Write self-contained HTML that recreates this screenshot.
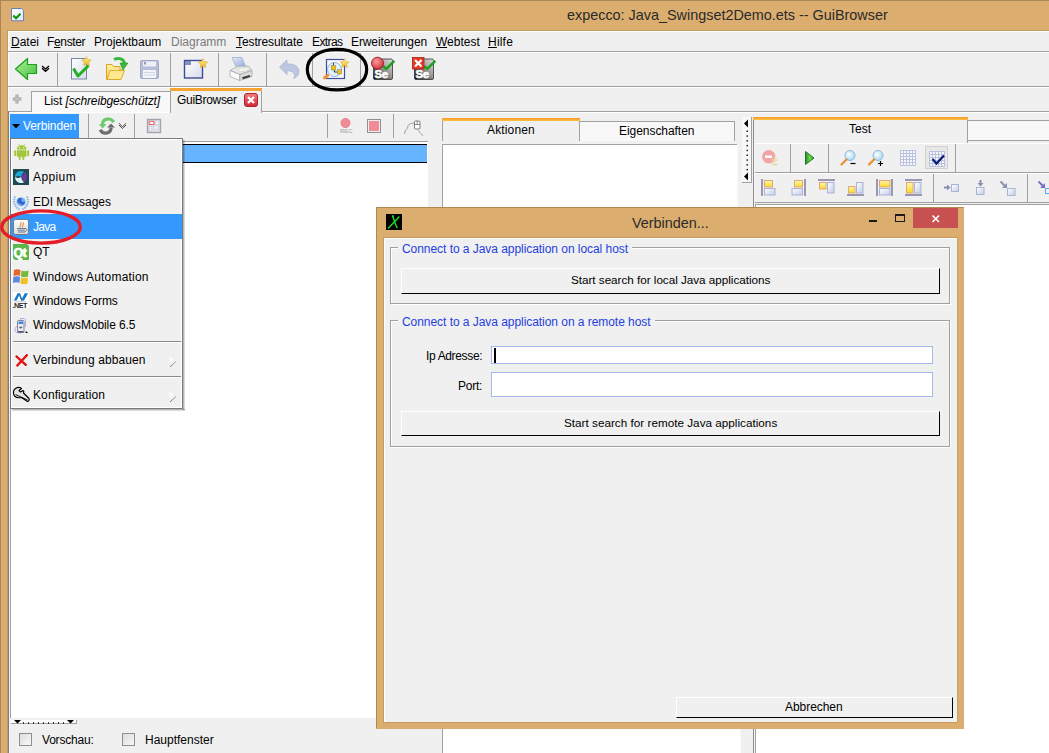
<!DOCTYPE html>
<html><head><meta charset="utf-8">
<style>
*{margin:0;padding:0;box-sizing:border-box}
html,body{width:1049px;height:753px;overflow:hidden;background:#DBAE70;font-family:"Liberation Sans",sans-serif;color:#000}
.a{position:absolute}
.t{position:absolute;white-space:nowrap;font-size:12px;line-height:14px;color:#000}
.u{text-decoration:underline;text-underline-offset:1px}
svg{position:absolute;overflow:visible}
</style></head><body>
<!-- main frame edges -->
<div class="a" style="left:0;top:0;width:1px;height:753px;background:#A8865A"></div>
<div class="a" style="left:0;top:0;width:1049px;height:1px;background:#A8865A"></div>
<!-- title icon -->
<svg style="left:10px;top:7px" width="16" height="16" viewBox="0 0 16 16">
 <defs><linearGradient id="gTi" x1="0" y1="0" x2="1" y2="1"><stop offset="0" stop-color="#FFFFFF"/><stop offset="1" stop-color="#DCE8F8"/></linearGradient></defs>
 <path d="M1.5 1.5h10l2 2v10.3h-12z" fill="url(#gTi)" stroke="#6C7FB8"/>
 <path d="M3.3 8.5l2.7 2.7 4.5-4.5" fill="none" stroke="#0E960E" stroke-width="2.2"/>
</svg>
<div class="t" style="left:567px;top:7px;font-size:14.4px;line-height:16px;color:#2A2A2A">expecco: Java_Swingset2Demo.ets -- GuiBrowser</div>

<!-- client -->
<div class="a" style="left:7px;top:30px;width:1042px;height:723px;background:#C49B5E"></div>
<div class="a" style="left:8px;top:31px;width:1041px;height:722px;background:#FFFFFF"></div>
<div class="a" style="left:9px;top:32px;width:1040px;height:721px;background:#F0F0F0"></div>

<!-- menu bar -->
<div class="a" style="left:8px;top:51px;width:1041px;height:1px;background:#A0A0A0"></div>
<div class="a" style="left:8px;top:52px;width:1041px;height:1px;background:#FFFFFF"></div>
<div class="t" style="left:11px;top:35px;width:28px"><span class="u">D</span>atei</div>
<div class="t" style="left:47px;top:35px;letter-spacing:-0.35px">F<span class="u">e</span>nster</div>
<div class="t" style="left:94px;top:35px">Projektbaum</div>
<div class="t" style="left:171px;top:35px;color:#7A7A7A">Diagramm</div>
<div class="t" style="left:236px;top:35px;letter-spacing:-0.1px"><span class="u">T</span>estresultate</div>
<div class="t" style="left:312px;top:35px;letter-spacing:-0.6px">Extras</div>
<div class="t" style="left:351px;top:35px;letter-spacing:-0.1px">Erweiterungen</div>
<div class="t" style="left:436px;top:35px"><span class="u">W</span>ebtest</div>
<div class="t" style="left:488px;top:35px;letter-spacing:0.2px"><span class="u">H</span>ilfe</div>

<!-- toolbar -->
<div class="a" style="left:8px;top:86px;width:1041px;height:1px;background:#A0A0A0"></div>
<div class="a" style="left:8px;top:87px;width:1041px;height:1px;background:#FFFFFF"></div>
<div class="a" style="left:57px;top:53px;width:1px;height:33px;background:#A0A0A0"></div>
<div class="a" style="left:170px;top:53px;width:1px;height:33px;background:#A0A0A0"></div>
<div class="a" style="left:218px;top:53px;width:1px;height:33px;background:#A0A0A0"></div>
<div class="a" style="left:266px;top:53px;width:1px;height:33px;background:#A0A0A0"></div>
<div class="a" style="left:312px;top:53px;width:1px;height:33px;background:#A0A0A0"></div>
<div class="a" style="left:360px;top:53px;width:1px;height:33px;background:#A0A0A0"></div>
<!-- toolbar icons -->
<svg style="left:0;top:0" width="1049" height="753" viewBox="0 0 1049 753">
 <defs>
  <linearGradient id="gArrow" x1="0" y1="0" x2="1" y2="1"><stop offset="0" stop-color="#B4F09C"/><stop offset="1" stop-color="#3CC23C"/></linearGradient>
  <linearGradient id="gStar" x1="0" y1="0" x2="0" y2="1"><stop offset="0" stop-color="#FFF0A0"/><stop offset="1" stop-color="#E8B820"/></linearGradient>
  <linearGradient id="gDoc" x1="0" y1="0" x2="1" y2="1"><stop offset="0" stop-color="#FFFFFF"/><stop offset="1" stop-color="#D8DCEC"/></linearGradient>
  <linearGradient id="gFold" x1="0" y1="0" x2="0" y2="1"><stop offset="0" stop-color="#FFF4A8"/><stop offset="1" stop-color="#F2C850"/></linearGradient>
  <linearGradient id="gSe" x1="0" y1="0" x2="1" y2="1"><stop offset="0" stop-color="#9A9A9A"/><stop offset="1" stop-color="#3A3A3A"/></linearGradient>
  <radialGradient id="gRed" cx="0.4" cy="0.35" r="0.7"><stop offset="0" stop-color="#FF9A9A"/><stop offset="1" stop-color="#D0303A"/></radialGradient>
 </defs>
 <!-- back arrow -->
 <path d="M15.5,69 L27.5,58.5 L27.5,64.5 L36.5,64.5 L36.5,73.5 L27.5,73.5 L27.5,79.5Z" fill="url(#gArrow)" stroke="#1EA01E" stroke-width="1.2" stroke-linejoin="round"/>
 <path d="M42,66 L45.5,69 L49,66 M42,68.3 L45.5,71.3 L49,68.3" fill="none" stroke="#000" stroke-width="1.3"/>
 <!-- check doc -->
 <rect x="71.5" y="58.5" width="15" height="20.5" fill="url(#gDoc)" stroke="#7288A8"/>
 <path d="M73.5,68.5 L78,76 L88.5,65.5" fill="none" stroke="#22B022" stroke-width="3" stroke-linejoin="round"/>
 <path d="M86.5,56.5 L87.9,59.6 L91.3,60.0 L88.8,62.2 L89.4,65.5 L86.5,63.9 L83.6,65.5 L84.2,62.2 L81.7,60.0 L85.1,59.6Z" fill="url(#gStar)" stroke="#E0B030" stroke-width="0.6"/>
 <!-- open folder -->
 <path d="M106.5,79.5 L106.5,64.5 L112,64.5 L113.5,66.5 L120,66.5 L120,70 L124,70 L120.5,79.5Z" fill="url(#gFold)" stroke="#D9A420" stroke-width="1"/>
 <path d="M107,79.5 L110,70.5 L124.5,70.5 L121,79.5Z" fill="#FFE890" stroke="#D9A420" stroke-width="0.8"/>
 <path d="M114,59.5 C118,57.5 123,58 124.5,63" fill="none" stroke="#3CB83C" stroke-width="3"/>
 <path d="M120,63 L128,63 L123,70Z" fill="#3CB83C" stroke="#1E961E" stroke-width="0.6"/>
 <!-- floppy -->
 <rect x="140.5" y="60.5" width="18" height="18" rx="1.5" fill="#B6BDD6" stroke="#A0A8C4"/>
 <rect x="143" y="61.5" width="13" height="5" fill="#EEF0F8"/>
 <rect x="144" y="62" width="2" height="2.5" fill="#8C96B8"/>
 <rect x="143" y="70" width="13" height="8" fill="#F2F4FA"/>
 <path d="M144,72.5h11M144,75h11" stroke="#C8CEE0" stroke-width="0.8"/>
 <!-- new window -->
 <rect x="184.5" y="60.5" width="18" height="17.5" fill="url(#gDoc)" stroke="#3C4E94" stroke-width="1.4"/>
 <rect x="185" y="61" width="6" height="4" fill="#8090C0"/>
 <path d="M203.0,58.5 L204.4,61.6 L207.8,62.0 L205.3,64.2 L205.9,67.5 L203.0,65.9 L200.1,67.5 L200.7,64.2 L198.2,62.0 L201.6,61.6Z" fill="url(#gStar)" stroke="#E0B030" stroke-width="0.6"/>
 <!-- printer -->
 <defs><linearGradient id="gPap" x1="0" y1="0" x2="1" y2="1"><stop offset="0" stop-color="#E4ECF8"/><stop offset="1" stop-color="#94AADC"/></linearGradient></defs>
 <path d="M232,57.5 L242,57.5 L245.5,66.5 L236,66.8Z" fill="url(#gPap)" stroke="#98AAD8" stroke-width="0.7"/>
 <path d="M230,70.5 L237.5,66.3 L248.5,66 L252,70.5 L240,74.5Z" fill="#E6E6E6" stroke="#A8A8A8" stroke-width="0.8"/>
 <path d="M237.5,68.5 L247,67.8 L249,70 L240,71.8Z" fill="#F6F6F6" stroke="#C4C4C4" stroke-width="0.5"/>
 <path d="M230,70.5 L240,74.5 L239.5,80.5 L230,76.5Z" fill="#FAFAFA" stroke="#A8A8A8" stroke-width="0.8"/>
 <path d="M240,74.5 L252,70.5 L252,76.5 L239.5,80.5Z" fill="#DCDCDC" stroke="#A8A8A8" stroke-width="0.8"/>
 <path d="M242,77.2 L249.5,75 L250.5,76.8 L243,79.2Z" fill="#3A3A3A"/>
 <!-- undo -->
 <path d="M279.5,67 L287,60 L287,64 C294,63.5 299,66.5 299,71.5 C299,75 296.5,77.5 293.5,78.5 C295.5,76 295.5,71 287,70.5 L287,74.5Z" fill="#BCC6DE" stroke="#A8B4D0" stroke-width="0.8"/>
 <!-- magnifier doc -->
 <rect x="326.5" y="59.5" width="18" height="19" fill="#FBF8FA" stroke="#3E50A0" stroke-width="1.2"/>
 <circle cx="334.5" cy="69.5" r="7" fill="#DDF4FC" stroke="#9AAEE0" stroke-width="1"/>
 <path d="M333.6,63 v2.6 M334.3,70 v2 h3.2" fill="none" stroke="#222" stroke-width="0.9"/>
 <rect x="331.3" y="65.5" width="4.4" height="4.5" fill="#F8C000" stroke="#7A7A7A" stroke-width="0.5"/>
 <rect x="337.5" y="69.7" width="3.8" height="4.3" fill="#F8C000" stroke="#7A7A7A" stroke-width="0.5"/>
 <path d="M324.5,77.8 L327.8,75.4" stroke="#F49038" stroke-width="3" stroke-linecap="round"/>
 <path d="M344.5,58.7 L345.9,61.6 L349.1,62.0 L346.7,64.2 L347.3,67.4 L344.5,65.8 L341.7,67.4 L342.3,64.2 L339.9,62.0 L343.1,61.6Z" fill="url(#gStar)" stroke="#E0B030" stroke-width="0.6"/>
 <!-- black ellipse annotation -->
 <path d="M307.3,69.6 C307.3,57.42 319.18,49.3 337,49.3 C354.82,49.3 366.7,57.42 366.7,69.6 C366.7,81.78 354.82,89.9 337,89.9 C319.18,89.9 307.3,81.78 307.3,69.6Z" fill="none" stroke="#000" stroke-width="3.2"/>
 <!-- Se record -->
 <defs><linearGradient id="gSe2" x1="1" y1="0" x2="0" y2="1"><stop offset="0" stop-color="#E0E0E0"/><stop offset="0.45" stop-color="#9A9A9A"/><stop offset="1" stop-color="#101010"/></linearGradient></defs>
 <rect x="373.5" y="59" width="19" height="20.5" rx="1.5" fill="url(#gSe2)" stroke="#303030" stroke-width="0.8"/>
 <text x="374.6" y="78" font-family="Liberation Sans" font-weight="bold" font-size="11.5" fill="#FFF" stroke="#FFF" stroke-width="0.5" letter-spacing="-0.6">Se</text>
 <path d="M383,66.2 L386.3,68.8 L394.3,60.8" fill="none" stroke="#1EA01E" stroke-width="2.6"/>
 <circle cx="377.5" cy="63.2" r="6" fill="url(#gRed)" stroke="#9A1820" stroke-width="0.9"/>
 <!-- Se stop -->
 <rect x="414.5" y="59" width="19" height="20.5" rx="1.5" fill="url(#gSe2)" stroke="#303030" stroke-width="0.8"/>
 <text x="415.6" y="78" font-family="Liberation Sans" font-weight="bold" font-size="11.5" fill="#FFF" stroke="#FFF" stroke-width="0.5" letter-spacing="-0.6">Se</text>
 <path d="M424,66.2 L427.3,68.8 L435.3,60.8" fill="none" stroke="#1EA01E" stroke-width="2.6"/>
 <rect x="412.5" y="57.5" width="11.5" height="11.5" fill="#E43A28" stroke="#B02010" stroke-width="0.8"/>
 <path d="M415,60 L421.5,66.5 M421.5,60 L415,66.5" stroke="#FFF" stroke-width="2.2"/>
</svg>
<!-- tab bar -->
<div class="a" style="left:8px;top:111px;width:1041px;height:1px;background:#A0A0A0"></div>
<div class="a" style="left:8px;top:112px;width:1041px;height:1px;background:#FFFFFF"></div>
<svg style="left:12px;top:93px" width="11" height="11" viewBox="0 0 11 11"><path d="M5,1.5v9M0.8,6h8.6" stroke="#9C9C9C" stroke-width="3"/><path d="M5,2v8M1.3,6h7.6" stroke="#C4C4C4" stroke-width="1.4"/></svg>
<div class="a" style="left:31px;top:91px;width:140px;height:21px;background:#F8F8F8;border:1px solid #A0A0A0;border-bottom:none"></div>
<div class="t" style="left:44px;top:94px;letter-spacing:-0.12px">List <i>[schreibgeschützt]</i></div>
<div class="a" style="left:170px;top:88px;width:92px;height:25px;background:#F0F0F0;border:1px solid #A0A0A0;border-bottom:none;border-top:none"></div>
<div class="a" style="left:170px;top:88px;width:92px;height:3px;background:#F7A531"></div>
<div class="t" style="left:177px;top:93px;letter-spacing:-0.3px">GuiBrowser</div>
<svg style="left:244px;top:93px" width="14" height="14" viewBox="0 0 14 14">
 <defs><linearGradient id="gClose" x1="0" y1="0" x2="0" y2="1"><stop offset="0" stop-color="#F08080"/><stop offset="1" stop-color="#D02838"/></linearGradient></defs>
 <rect x="0.5" y="0.5" width="13" height="13" rx="2.5" fill="url(#gClose)" stroke="#B02030"/>
 <path d="M4,4 L10,10 M10,4 L4,10" stroke="#FFF" stroke-width="2.2"/>
</svg>

<!-- left panel toolbar -->
<div class="a" style="left:8px;top:111px;width:1px;height:642px;background:#7E7E7E"></div>
<div class="a" style="left:9px;top:112px;width:1px;height:641px;background:#F4F4F4"></div>
<div class="a" style="left:10px;top:114px;width:69px;height:24px;background:#3399FF"></div>
<svg style="left:11px;top:122px" width="10" height="8" viewBox="0 0 10 8"><path d="M1,2 L9,2 L5,6.5Z" fill="#000"/></svg>
<div class="t" style="left:23px;top:119px;color:#FFF;letter-spacing:-0.1px">Verbinden</div>
<div class="a" style="left:88px;top:114px;width:1px;height:24px;background:#A0A0A0"></div>
<div class="a" style="left:134px;top:114px;width:1px;height:24px;background:#A0A0A0"></div>
<div class="a" style="left:327px;top:114px;width:1px;height:24px;background:#A0A0A0"></div>
<div class="a" style="left:393px;top:114px;width:1px;height:24px;background:#A0A0A0"></div>
<svg style="left:0;top:0" width="1049" height="753" viewBox="0 0 1049 753">
 <!-- refresh -->
 <path d="M102.5,124.5 C102.5,118.5 110.5,117 113.8,122.2" fill="none" stroke="#6CCB6C" stroke-width="3.2"/>
 <path d="M98.8,124 L106.4,124 L102.7,128.6Z" fill="#6CCB6C"/>
 <path d="M100.2,129.8 C102.5,134.5 110.5,134.5 111.2,127.5" fill="none" stroke="#6E6E6E" stroke-width="3.2"/>
 <path d="M107,127.6 L115,127.6 L111,123.4Z" fill="#6E6E6E"/>
 <path d="M119,123.2 L122.5,126.8 L126,123.2 M119,125 L122.5,128.6 L126,125" fill="none" stroke="#4A4A4A" stroke-width="1"/>
 <!-- grid icon -->
 <rect x="147.5" y="119.5" width="13" height="13" fill="#E2E2EC" stroke="#A4A4B0" stroke-width="1.4"/>
 <rect x="149.3" y="121.3" width="4.6" height="3.2" fill="#F4F8FF" stroke="#F06060" stroke-width="1"/>
 <rect x="155.5" y="121" width="3.5" height="3.5" fill="#F0F0F8" stroke="#C8C8D4" stroke-width="0.6"/>
 <rect x="149" y="126.5" width="2.8" height="4.5" fill="#F0F0F8" stroke="#C8C8D4" stroke-width="0.6"/>
 <rect x="153.5" y="126" width="5" height="3.2" fill="#F0F0F8" stroke="#C8C8D4" stroke-width="0.6"/>
 <!-- REC -->
 <circle cx="345.5" cy="123" r="4.5" fill="#F08C96" stroke="#E07080" stroke-width="0.8"/>
 <text x="340" y="132.5" font-family="Liberation Sans" font-size="6" fill="#A0A0A0">REC</text>
 <!-- stop -->
 <rect x="367.5" y="119.5" width="13" height="13" fill="#F0F0F0" stroke="#909090"/>
 <rect x="369" y="121" width="10" height="10" fill="#F08C96"/>
 <!-- mouse path -->
 <path d="M404.5,134 L405.5,130 L407.5,128.5 L408,125.5 L410.5,123.5 L415,123" fill="none" stroke="#A0A0A0" stroke-width="1"/>
 <rect x="414.5" y="121" width="5.5" height="8" rx="1" fill="#FFF" stroke="#707070" stroke-width="0.9"/>
 <path d="M414.5,124.5h5.5M417.2,121v3.5" stroke="#707070" stroke-width="0.8"/>
 <path d="M418.5,130.5 C419,133 421.5,133 423,136" fill="none" stroke="#A0A0A0" stroke-width="1"/>
</svg>

<!-- left panel content -->
<div class="a" style="left:10px;top:141px;width:418px;height:577px;background:#FFFFFF;border-left:1px solid #A0A0A0;border-top:1px solid #A0A0A0"></div>
<div class="a" style="left:11px;top:144px;width:416px;height:19px;background:#66B3FF;border-top:1px solid #000;border-bottom:1px solid #000"></div>
<!-- splitter handle bottom left -->
<div class="a" style="left:11px;top:720px;width:66px;height:4px;background:#FFF;border-right:1px solid #A0A0A0;border-bottom:1px solid #A0A0A0"></div>
<svg style="left:0;top:0" width="1049" height="753" viewBox="0 0 1049 753">
 <path d="M14,720 L21,720 L17.5,723.5Z M67,720 L74,720 L70.5,723.5Z" fill="#000"/>
 <path d="M23,723h1M28,723h1M33,723h1M38,723h1M43,723h1M48,723h1M53,723h1M58,723h1M63,723h1" stroke="#000" stroke-width="1.5"/>
</svg>
<!-- checkboxes -->
<div class="a" style="left:19px;top:733px;width:13px;height:13px;border:1px solid #8E8E8E;background:linear-gradient(135deg,#DCDCDC,#F8F8F8)"></div>
<div class="t" style="left:42px;top:733px;letter-spacing:-0.2px">Vorschau:</div>
<div class="a" style="left:122px;top:733px;width:13px;height:13px;border:1px solid #8E8E8E;background:linear-gradient(135deg,#DCDCDC,#F8F8F8)"></div>
<div class="t" style="left:145px;top:733px">Hauptfenster</div>
<!-- popup menu -->
<div class="a" style="left:183px;top:140px;width:2px;height:270px;background:linear-gradient(90deg,rgba(0,0,0,0.35),rgba(0,0,0,0.08))"></div>
<div class="a" style="left:12px;top:409px;width:173px;height:2px;background:linear-gradient(180deg,rgba(0,0,0,0.35),rgba(0,0,0,0.08))"></div>
<div class="a" style="left:10px;top:138px;width:173px;height:271px;background:#F0F0F0;border:1px solid #7A7A7A"></div>
<div class="a" style="left:11px;top:139px;width:171px;height:269px;border-top:1px solid #FFF;border-left:1px solid #FFF;border-right:1px solid #FFF;border-bottom:1px solid #FFF"></div>
<div class="a" style="left:11px;top:214px;width:171px;height:25px;background:#3399FF"></div>
<div class="a" style="left:13px;top:341px;width:168px;height:1px;background:#8A8A8A"></div>
<div class="a" style="left:13px;top:342px;width:168px;height:1px;background:#FFF"></div>
<div class="a" style="left:13px;top:376px;width:168px;height:1px;background:#8A8A8A"></div>
<div class="a" style="left:13px;top:377px;width:168px;height:1px;background:#FFF"></div>
<div class="t" style="left:33px;top:145px;letter-spacing:0.3px">Android</div>
<div class="t" style="left:33px;top:170px;letter-spacing:0.4px">Appium</div>
<div class="t" style="left:33px;top:195px">EDI Messages</div>
<div class="t" style="left:33px;top:220px;color:#FFF;letter-spacing:-0.7px">Java</div>
<div class="t" style="left:33px;top:245px">QT</div>
<div class="a" style="left:13px;top:244px;width:16px;height:16px;overflow:hidden"></div>
<div class="t" style="left:33px;top:270px;letter-spacing:0.2px">Windows Automation</div>
<div class="t" style="left:33px;top:294px;letter-spacing:-0.1px">Windows Forms</div>
<div class="t" style="left:33px;top:318px;letter-spacing:-0.1px">WindowsMobile 6.5</div>
<div class="t" style="left:33px;top:353px;letter-spacing:0.1px">Verbindung abbauen</div>
<div class="t" style="left:33px;top:388px;letter-spacing:0.1px">Konfiguration</div>
<svg style="left:0;top:0" width="1049" height="753" viewBox="0 0 1049 753">
 <!-- android -->
 <g fill="#A4C639">
  <path d="M16.8,149.6 C16.8,143.8 26.5,143.8 26.5,149.6Z"/>
  <rect x="16.8" y="150.3" width="9.7" height="6.5" rx="0.8"/>
  <rect x="14.2" y="150.3" width="1.9" height="5.8" rx="0.9"/>
  <rect x="27.2" y="150.3" width="1.9" height="5.8" rx="0.9"/>
  <rect x="18.8" y="156" width="1.9" height="4" rx="0.9"/>
  <rect x="22.4" y="156" width="1.9" height="4" rx="0.9"/>
 </g>
 <path d="M18.6,144.2 l0.9,1.2 M24.7,144.2 l-0.9,1.2" stroke="#A4C639" stroke-width="0.7"/>
 <circle cx="19.5" cy="147.6" r="0.6" fill="#FFF"/><circle cx="23.8" cy="147.6" r="0.6" fill="#FFF"/>
 <!-- appium -->
 <rect x="13" y="169" width="16" height="16" fill="#1F4A50"/>
 <path d="M15,177 A6,6 0 0 1 24,171.8 Q21.5,174 21,177 Q18.5,175 15,177Z" fill="#1AAAD8"/>
 <path d="M24,171.8 A6,6 0 0 1 24,182.2 Q23,179.5 21,177 Q24,175 24,171.8Z" fill="#6A3A9C"/>
 <path d="M24,182.2 A6,6 0 0 1 15,177 Q18.5,179 21,177 Q21.5,180 24,182.2Z" fill="#D8F2F2"/>
 <!-- EDI UN emblem -->
 <circle cx="21" cy="201.8" r="4.6" fill="#7FB0EC"/>
 <path d="M17.5,200 c1,-2 3,-2.5 4,-1.5 c1,1 -1,2 0.5,3 c1.5,1 2.5,-1 3,0.5 c0.3,1.5 -1.5,3 -3,3.2 c-1,0 -0.5,-1.5 -2,-1.5 c-1.5,0 -3,-1.5 -2.5,-3.7z" fill="#2A6AD0"/>
 <path d="M15.2,196.5 C13,200.5 14,206.5 19.5,209.5 M26.8,196.5 C29,200.5 28,206.5 22.5,209.5" fill="none" stroke="#8CB8EC" stroke-width="2.2" stroke-dasharray="1.6,0.7"/>
 <!-- java -->
 <defs><linearGradient id="gJav" x1="0" y1="0" x2="0" y2="1"><stop offset="0" stop-color="#FFFFFF"/><stop offset="1" stop-color="#DCDCDC"/></linearGradient></defs>
 <rect x="13.5" y="219.5" width="15" height="15" rx="2" fill="url(#gJav)" stroke="#7A7A7A"/>
 <path d="M20.5,227.5 C18.5,225.5 22.5,224.5 20.8,221.8 M22.8,227.5 C21.5,225.5 24.5,224.8 23.2,222.5" fill="none" stroke="#E88A40" stroke-width="1.1"/>
 <path d="M17,228.5 h8.5 M17.5,230.2 h7.5 M18,232 h7" stroke="#5A6E88" stroke-width="0.9"/>
 <path d="M25,228.3 c2.5,0 2.5,3 0,3.4" fill="none" stroke="#5A6E88" stroke-width="0.9"/>
 <!-- qt -->
 <path d="M13,244 h14 l2,2 v14 h-14 l-2,-2z" fill="#5CB84A"/>
 
 <!-- windows flag -->
 <path d="M14,270 C16,269 18.5,269 20.5,270 L20,276 C18,275 16,275 13.5,276Z" fill="#E8642A"/>
 <path d="M21.5,270.5 C23.5,271.5 26,271.5 28.5,270.5 L28,276.5 C25.5,277.5 23.5,277.5 21,276.5Z" fill="#7AB83A"/>
 <path d="M13.3,277 C15.5,276 18,276 20,277 L19.5,283 C17.5,282 15,282 13,283Z" fill="#5A88E0"/>
 <path d="M21,277.5 C23.5,278.5 25.5,278.5 28,277.5 L27.5,283.5 C25,284.5 23,284.5 20.5,283.5Z" fill="#F0C020"/>
 <!-- .NET -->
 <rect x="13" y="292" width="16" height="16" fill="#FFF"/>
 <path d="M13.8,300.5 L17.6,293.2 L20.2,293.2 L16.6,300.5Z M21,300.5 L24.8,293.2 L28,293.2 L24,300.5Z" fill="#1A78C8"/>
 <path d="M19.2,293.6 C20.6,296 20.4,299.2 22.6,300.2" stroke="#1A78C8" stroke-width="1.7" fill="none"/>
 <path d="M14.5,301.8 h12" stroke="#B0B0B0" stroke-width="0.7"/>
 <text x="12.6" y="307.6" font-family="Liberation Sans" font-size="7.2" font-weight="bold" fill="#2A2A2A" letter-spacing="-0.5">.NET</text>
 <!-- windows mobile -->
 <path d="M20.5,322 L20.5,318.5 L24.5,318.5 L25.5,319.5 L25.5,327" fill="none" stroke="#A8A0E0" stroke-width="0.9"/>
 <path d="M17,326.5 C14.5,327.5 14.5,331 16.5,332.5 L21,333" fill="none" stroke="#A8A0E0" stroke-width="0.9"/>
 <rect x="17.5" y="320.5" width="6.5" height="12" rx="1" fill="#ECECF4" stroke="#707890" stroke-width="0.9"/>
 <rect x="18.5" y="321.5" width="4.5" height="2.5" fill="#3A8AE0"/>
 <path d="M19,327.5 h3.5 M20.8,326 v3" stroke="#50506A" stroke-width="0.7"/>
 <rect x="18" y="331" width="5.5" height="1.5" fill="#5A5A80"/>
 <path d="M25,333 L26.5,331 L28,333Z" fill="#202020"/>
 <!-- red x -->
 <path d="M16.5,356.5 L25.8,364.8 M26.8,355.2 L17.3,365.5" stroke="#D40000" stroke-width="2.3" stroke-linecap="round"/>
 <path d="M17,356.8 L25.5,364.5 M26.5,355.5 L17.6,365.2" stroke="#FF2020" stroke-width="1"/>
 <!-- konfiguration (wrench) -->
 <path d="M13.5,391.5 C14,388.5 17,387 20,387.5 L21.5,388.5 L19,390.5 L20.5,392 L23,390.5 C24,391 24,392 23.5,393 L29,398.5 C29.5,399.5 29,401.5 27.5,401.5 L21.5,397.5 C19,398 16,397.5 14.5,396 C13.5,395 13.3,393 13.5,391.5Z" fill="#E4E4E4" stroke="#000" stroke-width="1.2" stroke-linejoin="round"/>
 <path d="M15.5,394.5 L27.5,400" stroke="#000" stroke-width="0.9"/>
 <!-- submenu arrows -->
 <path d="M169.5,356 L174,360 L169.5,363z" fill="#FAFAFA"/>
 <path d="M170,367 L176,361.5" stroke="#555" stroke-width="1" stroke-dasharray="1,0.6"/>
 <path d="M169.5,391 L174,395 L169.5,398z" fill="#FAFAFA"/>
 <path d="M170,402 L176,396.5" stroke="#555" stroke-width="1" stroke-dasharray="1,0.6"/>
 <!-- red annotation ellipse -->
 <ellipse cx="41" cy="227" rx="39.3" ry="16.1" fill="none" stroke="#E41E28" stroke-width="3.4"/>
</svg>
<div class="t" style="left:13.5px;top:245.5px;font-weight:bold;font-size:12.5px;color:#FFF;letter-spacing:-0.8px;-webkit-text-stroke:0.7px #FFF">Qt</div>
<!-- Aktionen / Eigenschaften panel -->
<div class="a" style="left:579px;top:121px;width:156px;height:20px;background:#F8F8F8;border:1px solid #A0A0A0;border-bottom:none"></div>
<div class="a" style="left:442px;top:118px;width:138px;height:23px;background:#F0F0F0;border-left:1px solid #A0A0A0;border-right:1px solid #A0A0A0"></div>
<div class="a" style="left:442px;top:118px;width:138px;height:3px;background:linear-gradient(180deg,#F59A2A,#FFC040)"></div>
<div class="t" style="left:487px;top:123px;letter-spacing:0.15px">Aktionen</div>
<div class="t" style="left:619px;top:124px;letter-spacing:-0.05px">Eigenschaften</div>
<div class="a" style="left:442px;top:144px;width:295px;height:609px;background:#FFF;border-left:1px solid #A0A0A0;border-top:1px solid #A0A0A0"></div>
<div class="a" style="left:737px;top:144px;width:1px;height:609px;background:#F8F8F8"></div>
<div class="a" style="left:737px;top:729px;width:3px;height:24px;background:#FFF"></div>
<div class="a" style="left:740px;top:729px;width:1px;height:24px;background:#F8F8F8"></div>
<!-- splitter -->
<div class="a" style="left:742px;top:117px;width:10px;height:66px;background:#F8F8F8;border-right:1px solid #A0A0A0;border-bottom:1px solid #A0A0A0"></div>
<svg style="left:0;top:0" width="1049" height="753" viewBox="0 0 1049 753">
 <path d="M744,123.5 L748,119.5 L748,127.5Z M744,176.5 L748,172.5 L748,180.5Z" fill="#000"/>
 <g fill="#222">
  <rect x="746.5" y="130.5" width="1.5" height="1.5"/><rect x="746.5" y="135.3" width="1.5" height="1.5"/><rect x="746.5" y="140.1" width="1.5" height="1.5"/><rect x="746.5" y="144.9" width="1.5" height="1.5"/><rect x="746.5" y="149.7" width="1.5" height="1.5"/><rect x="746.5" y="154.5" width="1.5" height="1.5"/><rect x="746.5" y="159.3" width="1.5" height="1.5"/><rect x="746.5" y="164.1" width="1.5" height="1.5"/><rect x="746.5" y="168.9" width="1.5" height="1.5"/>
 </g>
</svg>
<!-- Test panel -->
<div class="a" style="left:753px;top:117px;width:2px;height:636px;background:linear-gradient(90deg,#8C8C8C 50%,#F6F6F6 50%)"></div>
<div class="a" style="left:967px;top:120px;width:82px;height:21px;background:#F8F8F8;border:1px solid #A0A0A0;border-right:none"></div>
<div class="a" style="left:754px;top:117px;width:214px;height:26px;background:#F0F0F0;border-right:1px solid #A0A0A0"></div>
<div class="a" style="left:753px;top:117px;width:215px;height:3px;background:linear-gradient(180deg,#F59A2A,#FFC040)"></div>
<div class="t" style="left:849px;top:122px">Test</div>
<div class="a" style="left:755px;top:143px;width:294px;height:1px;background:#FFF"></div>
<div class="a" style="left:755px;top:172px;width:294px;height:1px;background:#A0A0A0"></div>
<div class="a" style="left:755px;top:173px;width:294px;height:1px;background:#FFF"></div>
<div class="a" style="left:755px;top:202px;width:294px;height:1px;background:#A0A0A0"></div>
<div class="a" style="left:755px;top:204px;width:294px;height:549px;background:#FFF;border-top:1px solid #A0A0A0;border-left:1px solid #A0A0A0"></div>
<div class="a" style="left:790px;top:144px;width:1px;height:28px;background:#A0A0A0"></div>
<div class="a" style="left:828px;top:144px;width:1px;height:28px;background:#A0A0A0"></div>
<div class="a" style="left:955px;top:144px;width:1px;height:28px;background:#A0A0A0"></div>
<div class="a" style="left:933px;top:174px;width:1px;height:28px;background:#A0A0A0"></div>
<div class="a" style="left:1027px;top:174px;width:1px;height:28px;background:#A0A0A0"></div>
<svg style="left:0;top:0" width="1049" height="753" viewBox="0 0 1049 753">
 <defs>
  <linearGradient id="gPlay" x1="0" y1="0" x2="1" y2="0"><stop offset="0" stop-color="#1E8E1E"/><stop offset="0.5" stop-color="#6AD84A"/><stop offset="1" stop-color="#2EA82E"/></linearGradient>
  <radialGradient id="gLens" cx="0.4" cy="0.4" r="0.6"><stop offset="0" stop-color="#FFFFFF"/><stop offset="1" stop-color="#A8D8F0"/></radialGradient>
  <linearGradient id="gYel" x1="0" y1="0" x2="0" y2="1"><stop offset="0" stop-color="#FFF8B0"/><stop offset="1" stop-color="#F8D820"/></linearGradient>
  <linearGradient id="gBlu" x1="0" y1="0" x2="1" y2="1"><stop offset="0" stop-color="#FFFFFF"/><stop offset="1" stop-color="#C4CCE4"/></linearGradient>
 </defs>
 <!-- row1 -->
 <circle cx="768.8" cy="156.7" r="6.7" fill="#F2A4A4"/>
 <rect x="765" y="155.5" width="7" height="2.4" fill="#FFF"/>
 <path d="M774.5,157 v6 M771.5,160 h6 M771.5,164.5 h6" stroke="#E8D8A0" stroke-width="1.4"/>
 <path d="M805.5,151.5 L814,158 L805.5,164.5Z" fill="url(#gPlay)" stroke="#1A6A1A" stroke-width="0.9"/>
 <circle cx="850" cy="155.5" r="5" fill="url(#gLens)" stroke="#8AB8E0" stroke-width="1"/>
 <path d="M841.5,164.5 L846.5,159.5" stroke="#E8902A" stroke-width="2.2" stroke-linecap="round"/>
 <path d="M850.5,163.5 h5" stroke="#000" stroke-width="1.2"/>
 <circle cx="878" cy="155.5" r="5" fill="url(#gLens)" stroke="#8AB8E0" stroke-width="1"/>
 <path d="M869,164.5 L874,159.5" stroke="#E8902A" stroke-width="2.2" stroke-linecap="round"/>
 <path d="M878,163.5 h5 M880.5,161 v5" stroke="#000" stroke-width="1.2"/>
 <g>
  <rect x="900" y="150" width="16" height="16" fill="#BAC2E0"/>
  <g fill="#F4F6FC">
   <rect x="901" y="151" width="2" height="2"/><rect x="904" y="151" width="2" height="2"/><rect x="907" y="151" width="2" height="2"/><rect x="910" y="151" width="2" height="2"/><rect x="913" y="151" width="2" height="2"/>
   <rect x="901" y="154" width="2" height="2"/><rect x="904" y="154" width="2" height="2"/><rect x="907" y="154" width="2" height="2"/><rect x="910" y="154" width="2" height="2"/><rect x="913" y="154" width="2" height="2"/>
   <rect x="901" y="157" width="2" height="2"/><rect x="904" y="157" width="2" height="2"/><rect x="907" y="157" width="2" height="2"/><rect x="910" y="157" width="2" height="2"/><rect x="913" y="157" width="2" height="2"/>
   <rect x="901" y="160" width="2" height="2"/><rect x="904" y="160" width="2" height="2"/><rect x="907" y="160" width="2" height="2"/><rect x="910" y="160" width="2" height="2"/><rect x="913" y="160" width="2" height="2"/>
   <rect x="901" y="163" width="2" height="2"/><rect x="904" y="163" width="2" height="2"/><rect x="907" y="163" width="2" height="2"/><rect x="910" y="163" width="2" height="2"/><rect x="913" y="163" width="2" height="2"/>
  </g>
 </g>
 <rect x="925.5" y="146.5" width="22" height="22" fill="#E8E8E8" stroke="#D0D0D0"/>
 <g>
  <rect x="929" y="151" width="16" height="16" fill="#BAC2E0"/>
  <g fill="#F4F6FC">
   <rect x="930" y="152" width="2" height="2"/><rect x="933" y="152" width="2" height="2"/><rect x="936" y="152" width="2" height="2"/><rect x="939" y="152" width="2" height="2"/><rect x="942" y="152" width="2" height="2"/>
   <rect x="930" y="155" width="2" height="2"/><rect x="933" y="155" width="2" height="2"/><rect x="936" y="155" width="2" height="2"/><rect x="939" y="155" width="2" height="2"/><rect x="942" y="155" width="2" height="2"/>
   <rect x="930" y="158" width="2" height="2"/><rect x="933" y="158" width="2" height="2"/><rect x="936" y="158" width="2" height="2"/><rect x="939" y="158" width="2" height="2"/><rect x="942" y="158" width="2" height="2"/>
   <rect x="930" y="161" width="2" height="2"/><rect x="933" y="161" width="2" height="2"/><rect x="936" y="161" width="2" height="2"/><rect x="939" y="161" width="2" height="2"/><rect x="942" y="161" width="2" height="2"/>
   <rect x="930" y="164" width="2" height="2"/><rect x="933" y="164" width="2" height="2"/><rect x="936" y="164" width="2" height="2"/><rect x="939" y="164" width="2" height="2"/><rect x="942" y="164" width="2" height="2"/>
  </g>
 </g>
 <path d="M932.5,159 L936.5,163.5 L944,155.5" fill="none" stroke="#0A1A78" stroke-width="2.2"/>
 <!-- row2 align icons -->
 <g stroke-width="1">
  <rect x="761" y="179" width="2" height="17" fill="#9A98B0"/>
  <rect x="764.5" y="180.5" width="8" height="6.5" fill="url(#gYel)" stroke="#E0A878"/>
  <rect x="764.5" y="188.5" width="10.5" height="6.5" fill="url(#gBlu)" stroke="#A8B4D8"/>
  <rect x="804" y="179" width="2" height="17" fill="#9A98B0"/>
  <rect x="794.5" y="180.5" width="8" height="6.5" fill="url(#gYel)" stroke="#E0A878"/>
  <rect x="792" y="188.5" width="10.5" height="6.5" fill="url(#gBlu)" stroke="#A8B4D8"/>
  <rect x="818" y="179" width="17" height="2" fill="#9A98B0"/>
  <rect x="819.5" y="182.5" width="6.5" height="6.5" fill="url(#gYel)" stroke="#E0A878"/>
  <rect x="827.5" y="182.5" width="6.5" height="10.5" fill="url(#gBlu)" stroke="#A8B4D8"/>
  <rect x="847" y="194" width="17" height="2" fill="#9A98B0"/>
  <rect x="848.5" y="186.5" width="6.5" height="6.5" fill="url(#gYel)" stroke="#E0A878"/>
  <rect x="856.5" y="182.5" width="6.5" height="10.5" fill="url(#gBlu)" stroke="#A8B4D8"/>
  <rect x="876" y="179" width="2" height="17" fill="#9A98B0"/>
  <rect x="891" y="179" width="2" height="17" fill="#9A98B0"/>
  <rect x="879.5" y="180.5" width="10.5" height="6.5" fill="url(#gYel)" stroke="#E0A878"/>
  <rect x="879.5" y="188.5" width="10.5" height="6.5" fill="url(#gBlu)" stroke="#A8B4D8"/>
  <rect x="905" y="179" width="17" height="2" fill="#9A98B0"/>
  <rect x="905" y="194" width="17" height="2" fill="#9A98B0"/>
  <rect x="906.5" y="182.5" width="6.5" height="10.5" fill="url(#gYel)" stroke="#E0A878"/>
  <rect x="914.5" y="182.5" width="6.5" height="10.5" fill="url(#gBlu)" stroke="#A8B4D8"/>
  <path d="M944,187.5 h4" stroke="#8A90B0" stroke-width="2"/><path d="M947,184.5 L950.5,187.5 L947,190.5Z" fill="#8A90B0"/>
  <rect x="951.5" y="184.5" width="7" height="7" fill="url(#gBlu)" stroke="#A8B4D8"/>
  <path d="M980.5,180 v4" stroke="#8A90B0" stroke-width="2"/><path d="M977.5,183 L980.5,186.5 L983.5,183Z" fill="#8A90B0"/>
  <rect x="976.5" y="187.5" width="7.5" height="7" fill="url(#gBlu)" stroke="#A8B4D8"/>
  <path d="M1000.5,181.5 L1005,186" stroke="#8A90B0" stroke-width="2"/><path d="M1002,188 L1007,188 L1007,183Z" fill="#8A90B0"/>
  <rect x="1007.5" y="188.5" width="7.5" height="7" fill="url(#gBlu)" stroke="#A8B4D8"/>
  <path d="M1038.5,181.5 L1043,186" stroke="#7A70C8" stroke-width="2"/><path d="M1040,188 L1045,188 L1045,183Z" fill="#7A70C8"/>
  <rect x="1045.5" y="188.5" width="6" height="5" fill="#E8F4FF" stroke="#60A8E8"/>
 </g>
</svg>
<!-- dialog -->
<div class="a" style="left:376px;top:207px;width:588px;height:522px;background:#DBAE70;border:1px solid #B08850;border-right-color:#D8AC6E;border-bottom-color:#D8AC6E"></div>
<svg style="left:386px;top:214px" width="16" height="16" viewBox="0 0 16 16">
 <rect width="16" height="16" fill="#000"/>
 <path d="M2.5,14 L13,3 M7,1.8 C7.2,4 8,7 11,13.5" fill="none" stroke="#1ED828" stroke-width="1.5" stroke-linecap="round"/>
 <circle cx="7" cy="2.5" r="1.1" fill="#1ED828"/>
</svg>
<div class="t" style="left:632px;top:215px;font-size:14.4px;line-height:16px;color:#2A2A2A">Verbinden...</div>
<div class="a" style="left:869px;top:220px;width:8px;height:2px;background:#1A1A1A"></div>
<div class="a" style="left:895px;top:214px;width:10px;height:8px;border:1px solid #1A1A1A;border-top-width:2px"></div>
<div class="a" style="left:913px;top:208px;width:45px;height:20px;background:#C75050"></div>
<svg style="left:913px;top:208px" width="45" height="20" viewBox="0 0 45 20"><path d="M19.5,7.5 L26,14 M26,7.5 L19.5,14" stroke="#FFF" stroke-width="1.6"/></svg>
<!-- dialog client -->
<div class="a" style="left:383px;top:237px;width:575px;height:486px;background:#F0F0F0;border:1px solid #C49B5E;border-right-color:#C9A064;border-bottom-color:#C49B5E"></div>
<div class="a" style="left:384px;top:238px;width:1px;height:484px;background:#FFF"></div>
<div class="a" style="left:384px;top:238px;width:573px;height:1px;background:#FFF"></div>
<!-- group 1 -->
<div class="a" style="left:391px;top:248px;width:560px;height:57px;border:1px solid #FFF"></div>
<div class="a" style="left:390px;top:247px;width:560px;height:57px;border:1px solid #A0A0A0"></div>
<div class="t" style="left:398px;top:242px;padding:0 4px;background:#F0F0F0;color:#1F3FDF;letter-spacing:-0.05px">Connect to a Java application on local host</div>
<div class="a" style="left:401px;top:268px;width:539px;height:26px;background:#F0F0F0;border:1px solid #FFF;border-right-color:#000;border-bottom-color:#000"></div>
<div class="t" style="left:571px;top:273px;font-size:11.7px;letter-spacing:-0.02px">Start search for local Java applications</div>
<!-- group 2 -->
<div class="a" style="left:391px;top:321px;width:560px;height:127px;border:1px solid #FFF"></div>
<div class="a" style="left:390px;top:320px;width:560px;height:127px;border:1px solid #A0A0A0"></div>
<div class="t" style="left:398px;top:315px;padding:0 4px;background:#F0F0F0;color:#1F3FDF;letter-spacing:-0.05px">Connect to a Java application on a remote host</div>
<div class="t" style="left:426px;top:349px;letter-spacing:-0.35px">Ip Adresse:</div>
<div class="a" style="left:491px;top:346px;width:442px;height:18px;background:#FFF;border:1px solid #A8B8EC"></div>
<div class="a" style="left:494px;top:348px;width:2px;height:15px;background:#000"></div>
<div class="t" style="left:458px;top:379px;letter-spacing:-0.25px">Port:</div>
<div class="a" style="left:491px;top:372px;width:442px;height:25px;background:#FFF;border:1px solid #A8B8EC"></div>
<div class="a" style="left:401px;top:411px;width:539px;height:25px;background:#F0F0F0;border:1px solid #FFF;border-right-color:#000;border-bottom-color:#000"></div>
<div class="t" style="left:564px;top:416px;font-size:11.7px;letter-spacing:0.02px">Start search for remote Java applications</div>
<!-- Abbrechen -->
<div class="a" style="left:676px;top:697px;width:277px;height:21px;background:#F0F0F0;border:1px solid #FFF;border-right-color:#000;border-bottom-color:#000"></div>
<div class="t" style="left:785px;top:700px;letter-spacing:-0.05px">Abbrechen</div>
</body></html>
